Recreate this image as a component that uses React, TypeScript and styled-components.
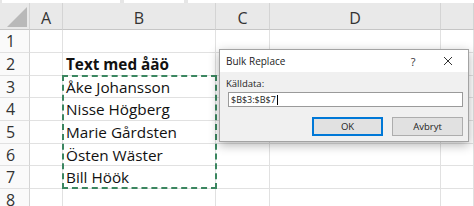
import React from 'react'
import styled, { createGlobalStyle } from 'styled-components'

const GlobalStyle = createGlobalStyle`
  html, body {
    margin: 0;
    padding: 0;
    background: #ffffff;
  }
  body {
    width: 474px;
    height: 206px;
    overflow: hidden;
  }
  * { box-sizing: border-box; }
`

const columns = ['A', 'B', 'C', 'D', '']
const rowHeights = [23, 23, 22, 23, 23, 22, 23, 23]
const cellsB: Record<number, { text: string, bold?: boolean }> = {
    2: { text: 'Text med åäö', bold: true },
    3: { text: 'Åke Johansson' },
    4: { text: 'Nisse Högberg' },
    5: { text: 'Marie Gårdsten' },
    6: { text: 'Östen Wäster' },
    7: { text: 'Bill Höök' },
}

export default function App() {
    return (
        <Page>
            <GlobalStyle />
            <TopStrip>
                <NameBox />
                <FxBox />
                <FormulaBox />
            </TopStrip>
            <Sheet style={{ gridTemplateRows: `27px ${rowHeights.map((h) => h + 'px').join(' ')}` }}>
                <Corner $row={1} $col={1}><CornerTriangle /></Corner>
                {columns.map((c, i) => (
                    <ColHead key={'h' + i} $row={1} $col={i + 2}>{c}</ColHead>
                ))}
                {rowHeights.map((_, r) => {
                    const row = r + 1
                    return (
                        <React.Fragment key={row}>
                            <RowHead $row={row + 1} $col={1}>{row}</RowHead>
                            {columns.map((c, i) => (
                                <Cell key={c + i} $row={row + 1} $col={i + 2} $bold={c === 'B' && cellsB[row]?.bold}>
                                    {c === 'B' && cellsB[row] ? cellsB[row].text : ''}
                                </Cell>
                            ))}
                        </React.Fragment>
                    )
                })}
                <Marquee />
            </Sheet>

            <Dialog>
                <TitleBar>
                    <Title>Bulk Replace</Title>
                    <TitleButton $w={30}>?</TitleButton>
                    <TitleButton $w={40}>
                        <svg width="10" height="10" viewBox="0 0 10 10">
                            <path d="M1 1 L9 9 M9 1 L1 9" stroke="#333" strokeWidth="1" fill="none" />
                        </svg>
                    </TitleButton>
                </TitleBar>
                <DialogBody>
                    <Label>Källdata:</Label>
                    <Input>
                        $B$3:$B$7<Caret />
                    </Input>
                    <ButtonRow>
                        <Button $primary>OK</Button>
                        <Button>Avbryt</Button>
                    </ButtonRow>
                </DialogBody>
            </Dialog>
        </Page>
    )
}

const Page = styled.div`
    position: relative;
    width: 474px;
    height: 206px;
    overflow: hidden;
    background: #fff;
    font-family: "Open Sans", "Noto Sans", sans-serif;
`

const TopStrip = styled.div`
    height: 3px;
    display: flex;
    background: #e6e6e6;
    gap: 4px;
    padding-left: 2px;
`

const NameBox = styled.div`
    width: 118px;
    background: #fff;
`
const FxBox = styled.div`
    width: 60px;
    background: #fff;
`
const FormulaBox = styled.div`
    flex: 1;
    background: #fff;
`

const Sheet = styled.div`
    display: grid;
    grid-template-columns: 30px 33px 153px 54px 171px 33px;
    font-family: "Open Sans", "Noto Sans", sans-serif;
`

type Pos = { $row: number, $col: number }

const Corner = styled.div<Pos>`
    grid-row: ${(p) => p.$row};
    grid-column: ${(p) => p.$col};
    position: relative;
    background: #e9e9e9;
    border-right: 1px solid #d4d4d4;
    border-bottom: 1px solid #c6c6c6;
`

const CornerTriangle = styled.div`
    position: absolute;
    right: 2px;
    bottom: 2px;
    width: 0;
    height: 0;
    border-left: 20px solid transparent;
    border-bottom: 20px solid #b9b9b9;
`

const ColHead = styled.div<Pos>`
    grid-row: ${(p) => p.$row};
    grid-column: ${(p) => p.$col};
    background: #e9e9e9;
    border-right: 1px solid #d4d4d4;
    border-bottom: 1px solid #c6c6c6;
    display: flex;
    align-items: center;
    justify-content: center;
    font-size: 16px;
    color: #333;
    padding-top: 3px;
`

const RowHead = styled.div<Pos>`
    grid-row: ${(p) => p.$row};
    grid-column: ${(p) => p.$col};
    background: #fafafa;
    border-right: 1px solid #d4d4d4;
    border-bottom: 1px solid #e1e1e1;
    display: flex;
    align-items: center;
    padding-left: 6px;
    font-size: 16px;
    color: #333;
`

const Cell = styled.div<Pos & { $bold?: boolean }>`
    grid-row: ${(p) => p.$row};
    grid-column: ${(p) => p.$col};
    border-right: 1px solid #e1e1e1;
    border-bottom: 1px solid #e1e1e1;
    display: flex;
    align-items: center;
    padding-left: 3px;
    font-size: 15.3px;
    font-weight: ${(p) => (p.$bold ? 700 : 400)};
    color: #111;
    white-space: nowrap;
    overflow: visible;
`

const Marquee = styled.div`
    grid-column: 3 / 4;
    grid-row: 4 / 9;
    margin: -1px -1px 0 -1px;
    border: 2px dashed #3b8660;
    pointer-events: none;
`

const Dialog = styled.div`
    position: absolute;
    left: 219px;
    top: 49px;
    width: 250px;
    height: 93px;
    border: 1px solid #a3a3a3;
    background: #f0f0f0;
    box-shadow: 0 3px 10px rgba(0, 0, 0, 0.3);
    display: flex;
    flex-direction: column;
    font-family: "Open Sans", "Noto Sans", sans-serif;
    color: #222;
`

const TitleBar = styled.div`
    height: 22px;
    background: #fff;
    display: flex;
    align-items: center;
    padding-left: 6px;
`

const Title = styled.div`
    flex: 1;
    font-size: 10px;
`

const TitleButton = styled.div<{ $w: number }>`
    width: ${(p) => p.$w}px;
    height: 22px;
    display: flex;
    align-items: center;
    justify-content: center;
    font-size: 11px;
    color: #333;
`

const DialogBody = styled.div`
    flex: 1;
    display: flex;
    flex-direction: column;
    padding: 5px 5px 0 6px;
`

const Label = styled.div`
    font-size: 9.5px;
    line-height: 13px;
    margin-bottom: 2px;
`

const Input = styled.div`
    margin-left: 2px;
    height: 15px;
    background: #fff;
    border: 1px solid #9a9a9a;
    font-size: 9px;
    line-height: 13px;
    padding-left: 2px;
    display: flex;
    align-items: center;
`

const Caret = styled.span`
    display: inline-block;
    width: 1px;
    height: 10px;
    background: #000;
    margin-left: 1px;
`

const ButtonRow = styled.div`
    display: flex;
    justify-content: flex-end;
    gap: 9px;
    margin-top: 10px;
`

const Button = styled.div<{ $primary?: boolean }>`
    width: 71px;
    height: 19px;
    background: #e1e1e1;
    border: ${(p) => (p.$primary ? '2px solid #0078d7' : '1px solid #adadad')};
    display: flex;
    align-items: center;
    justify-content: center;
    font-size: 9.5px;
    color: #222;
`
